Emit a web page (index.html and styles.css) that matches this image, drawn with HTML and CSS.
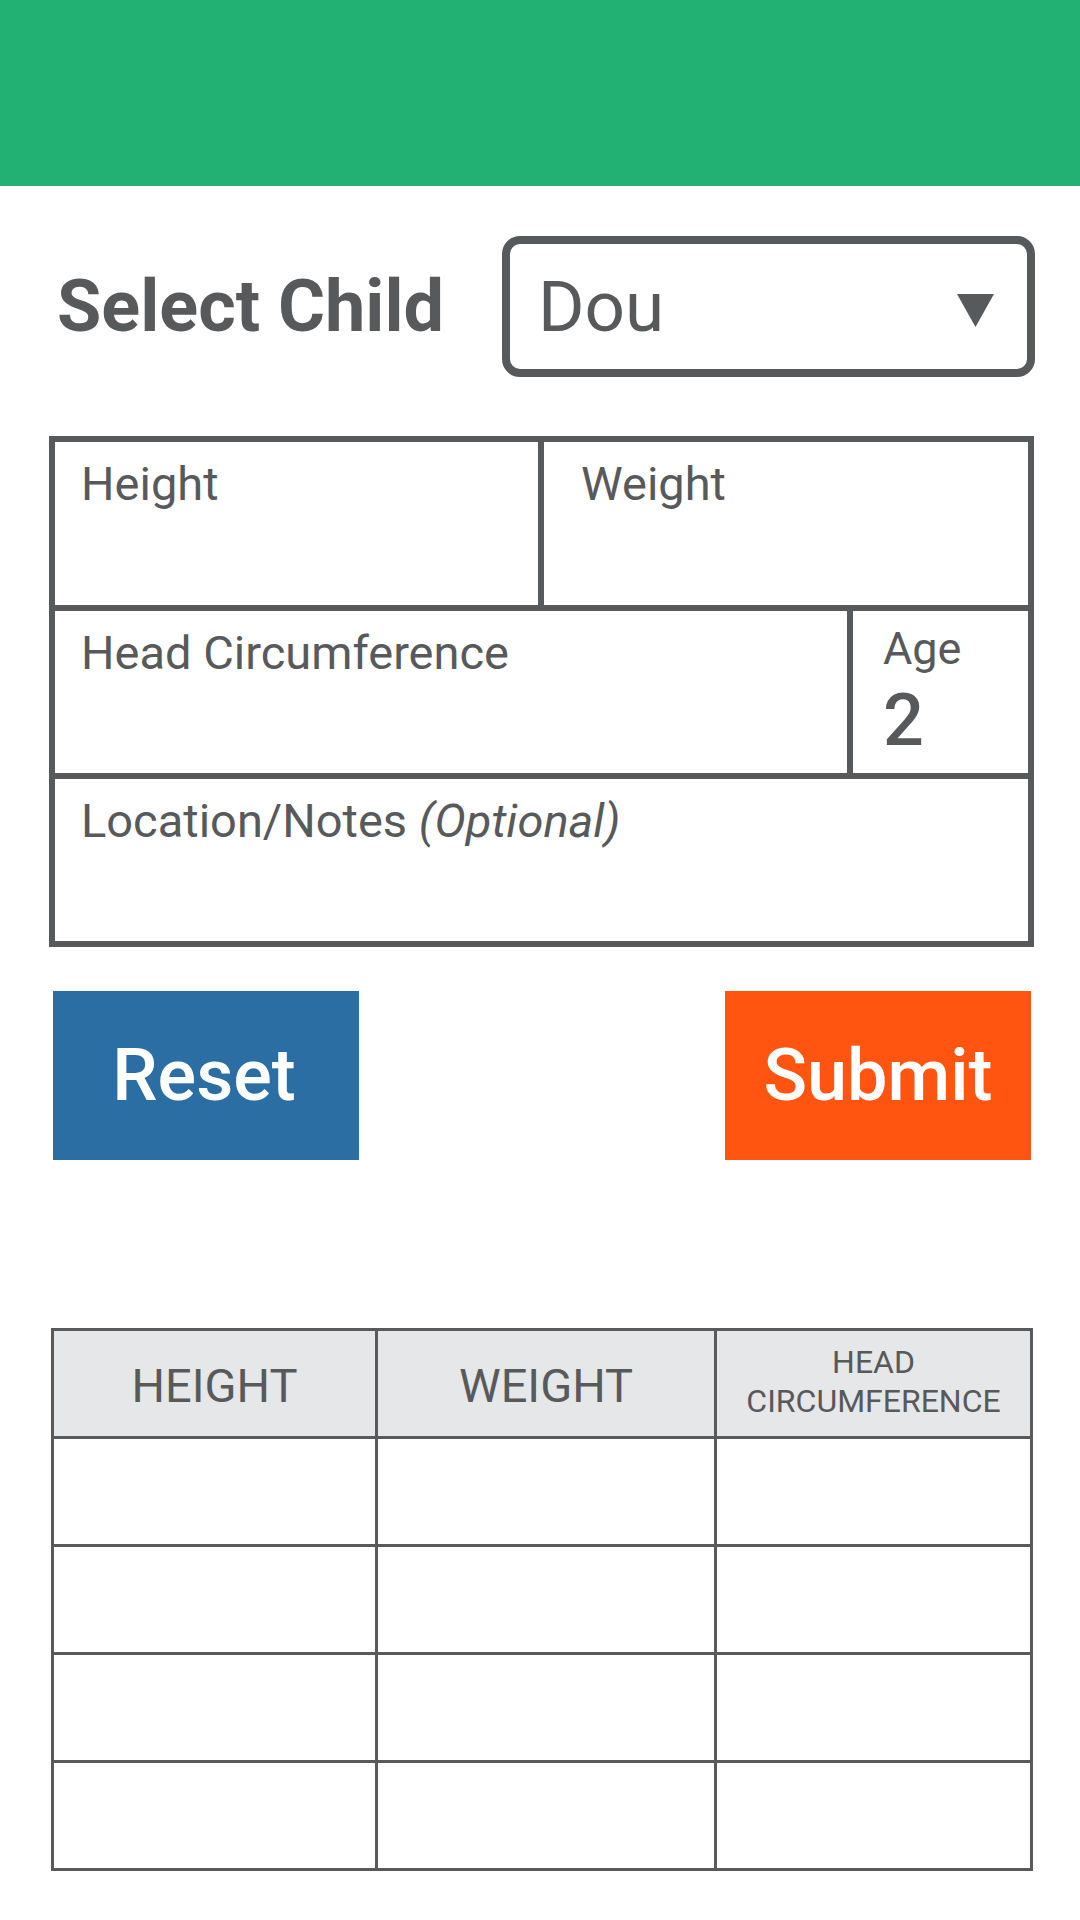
FILE: index.html
```html
<!DOCTYPE html>
<html lang="en">
<head>
<meta charset="utf-8">
<title>Growth Entry</title>
<link rel="stylesheet" href="styles.css">
</head>
<body>
<header class="topbar"></header>
<main class="page">
  <section class="select-row">
    <h1 class="select-label">Select Child</h1>
    <div class="dropdown">
      <span class="dropdown-value">Dou</span>
      <svg class="dropdown-arrow" width="37" height="33" viewBox="0 0 37 33"><polygon points="0,0 37,0 18.5,33" fill="#58595b"/></svg>
    </div>
  </section>

  <section class="form">
    <div class="form-row">
      <div class="cell cell-half"><span class="label">Height</span></div>
      <div class="cell cell-weight"><span class="label">Weight</span></div>
    </div>
    <div class="form-row">
      <div class="cell cell-wide"><span class="label">Head Circumference</span></div>
      <div class="cell cell-age">
        <span class="label label-age">Age</span>
        <span class="age-value">2</span>
      </div>
    </div>
    <div class="form-row">
      <div class="cell"><span class="label">Location/Notes <em>(Optional)</em></span></div>
    </div>
  </section>

  <section class="actions">
    <button class="btn btn-reset">Reset</button>
    <button class="btn btn-submit">Submit</button>
  </section>

  <section class="table">
    <div class="th">HEIGHT</div>
    <div class="th">WEIGHT</div>
    <div class="th th-small">HEAD<br>CIRCUMFERENCE</div>
    <div class="td"></div><div class="td"></div><div class="td"></div>
    <div class="td"></div><div class="td"></div><div class="td"></div>
    <div class="td"></div><div class="td"></div><div class="td"></div>
    <div class="td"></div><div class="td"></div><div class="td"></div>
  </section>
</main>
</body>
</html>
```

FILE: styles.css
```css
* { box-sizing: border-box; }

html, body {
  margin: 0;
  padding: 0;
  background: #ffffff;
}

body {
  font-family: Roboto, "Noto Sans", "Liberation Sans", sans-serif;
  color: #58595b;
  width: 1080px;
  min-height: 1920px;
}

.topbar {
  height: 186px;
  background: #22b073;
}

.page {
  padding: 50px 46px 0 49px;
}

.select-row {
  display: flex;
  align-items: center;
  height: 141px;
}

.select-label {
  margin: 0 0 0 8px;
  font-size: 72px;
  font-weight: 700;
  line-height: 1;
  color: #58595b;
}

.dropdown {
  margin-left: auto;
  margin-right: -1px;
  width: 533px;
  height: 141px;
  border: 8px solid #58595b;
  border-radius: 18px;
  display: flex;
  align-items: center;
  justify-content: space-between;
  padding: 0 33px 0 28px;
}

.dropdown-value {
  font-size: 71px;
  font-weight: 400;
}

.dropdown-arrow {
  display: block;
  margin-top: 8px;
}

.form {
  margin-top: 59px;
  border: 6px solid #58595b;
}

.form-row {
  display: flex;
  height: 168px;
  border-top: 6px solid #58595b;
}

.form-row:first-child {
  height: 163px;
  border-top: none;
}

.cell {
  flex: 1;
  padding: 14px 0 0 26px;
}

.cell + .cell {
  border-left: 6px solid #58595b;
}

.cell-half {
  flex: 0 0 483px;
}

.cell-weight {
  padding-left: 37px;
}

.cell-wide {
  flex: 0 0 792px;
}

.cell-age {
  flex: 1;
  padding: 11px 0 0 30px;
  display: flex;
  flex-direction: column;
}

.label {
  display: block;
  font-size: 47px;
  line-height: 55px;
}

.label em {
  font-style: italic;
}

.label-age {
  font-size: 45px;
  line-height: 53px;
}

.age-value {
  display: block;
  margin-top: 10px;
  font-size: 72px;
  line-height: 72px;
  font-weight: 500;
}

.actions {
  margin-top: 44px;
  display: flex;
  justify-content: space-between;
  padding: 0 3px 0 4px;
}

.btn {
  width: 306px;
  height: 169px;
  border: none;
  padding: 0 4px 0 0;
  font-family: Roboto, "Noto Sans", "Liberation Sans", sans-serif;
  font-size: 72px;
  font-weight: 500;
  color: #ffffff;
  cursor: pointer;
}

.btn-reset {
  background: #2b6ea3;
}

.btn-submit {
  background: #ff5511;
  padding: 0;
}

.table {
  margin: 168px 1px 0 2px;
  display: grid;
  grid-template-columns: 321px 336px 1fr;
  grid-auto-rows: 105px;
  gap: 3px;
  padding: 3px;
  background: #5a5a5b;
}

.th {
  background: #e6e7e8;
  display: flex;
  align-items: center;
  justify-content: center;
  text-align: center;
  font-size: 47px;
  line-height: 1;
  padding-top: 4px;
}

.th-small {
  font-size: 32px;
  line-height: 39px;
  padding-top: 0;
  padding-bottom: 4px;
}

.td {
  background: #ffffff;
}
```
